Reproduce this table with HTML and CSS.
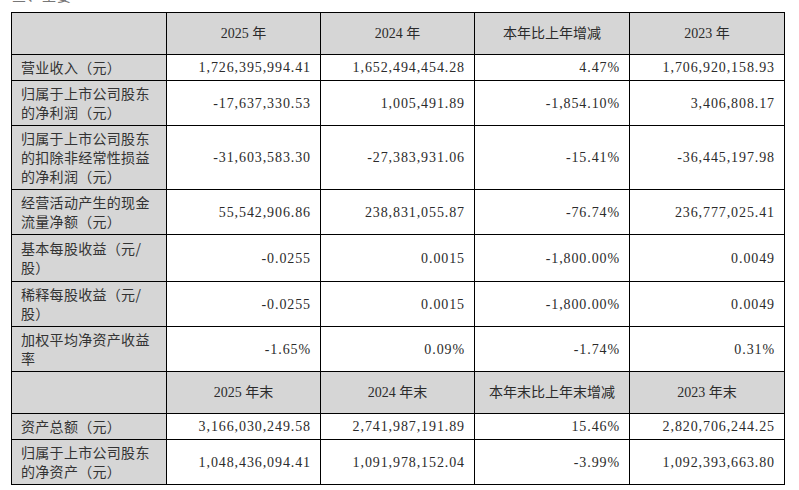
FILE: index.html
```html
<!DOCTYPE html>
<html lang="zh-CN">
<head>
<meta charset="utf-8">
<title>主要会计数据</title>
<link rel="stylesheet" href="styles.css">
</head>
<body>
<div class="page">
  <div class="heading">三、主要</div>
  <table class="data">
    <colgroup>
      <col class="c1"><col class="c2"><col class="c3"><col class="c4"><col class="c5">
    </colgroup>
    <tr class="head">
      <th class="lab"></th><th>2025 年</th><th>2024 年</th><th>本年比上年增减</th><th>2023 年</th>
    </tr>
    <tr>
      <td class="lab">营业收入（元）</td><td class="num">1,726,395,994.41</td><td class="num">1,652,494,454.28</td><td class="num">4.47%</td><td class="num">1,706,920,158.93</td>
    </tr>
    <tr>
      <td class="lab">归属于上市公司股东<br>的净利润（元）</td><td class="num">-17,637,330.53</td><td class="num">1,005,491.89</td><td class="num">-1,854.10%</td><td class="num">3,406,808.17</td>
    </tr>
    <tr>
      <td class="lab">归属于上市公司股东<br>的扣除非经常性损益<br>的净利润（元）</td><td class="num">-31,603,583.30</td><td class="num">-27,383,931.06</td><td class="num">-15.41%</td><td class="num">-36,445,197.98</td>
    </tr>
    <tr>
      <td class="lab">经营活动产生的现金<br>流量净额（元）</td><td class="num">55,542,906.86</td><td class="num">238,831,055.87</td><td class="num">-76.74%</td><td class="num">236,777,025.41</td>
    </tr>
    <tr class="tall">
      <td class="lab">基本每股收益（元/<br>股）</td><td class="num">-0.0255</td><td class="num">0.0015</td><td class="num">-1,800.00%</td><td class="num">0.0049</td>
    </tr>
    <tr>
      <td class="lab">稀释每股收益（元/<br>股）</td><td class="num">-0.0255</td><td class="num">0.0015</td><td class="num">-1,800.00%</td><td class="num">0.0049</td>
    </tr>
    <tr>
      <td class="lab">加权平均净资产收益<br>率</td><td class="num">-1.65%</td><td class="num">0.09%</td><td class="num">-1.74%</td><td class="num">0.31%</td>
    </tr>
    <tr class="head">
      <th class="lab"></th><th>2025 年末</th><th>2024 年末</th><th>本年末比上年末增减</th><th>2023 年末</th>
    </tr>
    <tr>
      <td class="lab">资产总额（元）</td><td class="num">3,166,030,249.58</td><td class="num">2,741,987,191.89</td><td class="num">15.46%</td><td class="num">2,820,706,244.25</td>
    </tr>
    <tr>
      <td class="lab">归属于上市公司股东<br>的净资产（元）</td><td class="num">1,048,436,094.41</td><td class="num">1,091,978,152.04</td><td class="num">-3.99%</td><td class="num">1,092,393,663.80</td>
    </tr>
  </table>
</div>
</body>
</html>
```

FILE: styles.css
```css
html, body {
  margin: 0;
  padding: 0;
  background: #ffffff;
}
.page {
  padding: 0 0 0 11px;
  font-family: "Liberation Serif", "Noto Sans CJK SC", serif;
  font-size: 14px;
  color: #2b2b2b;
}
.heading {
  line-height: 19px;
  margin-top: -13px;
  margin-bottom: 6px;
  color: #777777;
  padding-left: 1px;
  letter-spacing: 1px;
}
.data {
  border-collapse: collapse;
  table-layout: fixed;
  width: 773px;
}
.c1 { width: 155px; }
.c2 { width: 154px; }
.c3 { width: 154px; }
.c4 { width: 155px; }
.c5 { width: 155px; }
.data th,
.data td {
  border: 1px solid #000000;
  line-height: 19px;
  padding: 3px 9px 3px 9px;
  vertical-align: middle;
  font-weight: normal;
}
.data .head th {
  background: #d6d6d6;
  padding-top: 11px;
  padding-bottom: 11px;
  text-align: center;
}
.data td.lab {
  background: #d6d6d6;
  text-align: left;
  font-family: "Noto Sans CJK SC", sans-serif;
  color: #333333;
  letter-spacing: 0.3px;
  white-space: nowrap;
}
.data td.num {
  text-align: right;
  letter-spacing: 0.9px;
  white-space: nowrap;
}
.data .tall td {
  padding-top: 4px;
  padding-bottom: 4px;
}
```
